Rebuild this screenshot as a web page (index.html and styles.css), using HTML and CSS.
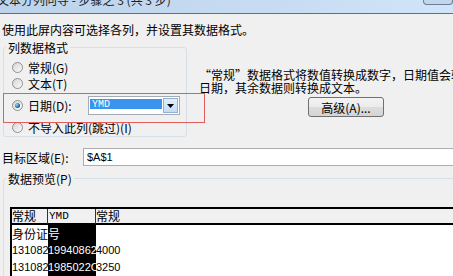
FILE: index.html
```html
<!DOCTYPE html>
<html lang="zh-CN">
<head>
  <meta charset="UTF-8">
  <title>文本分列向导</title>
  <link rel="stylesheet" href="styles.css">
</head>
<body>
  <div class="titlebar">
    <span class="title">文本分列向导 - 步骤之 3 (共 3 步)</span>
    <span class="close"></span>
  </div>

  <p class="intro">使用此屏内容可选择各列，并设置其数据格式。</p>

  <div class="format-row">
    <fieldset class="group format">
      <legend>列数据格式</legend>
      <label class="opt"><span class="radio"></span>常规(G)</label>
      <label class="opt"><span class="radio"></span>文本(T)</label>
      <label class="opt date">
        <span class="radio on"></span>
        <span class="date-label">日期(D):</span>
        <span class="select">
          <span class="sel-value">YMD</span>
          <span class="sel-btn">
            <svg width="7" height="4" viewBox="0 0 7 4"><path d="M0 0h7L3.5 4z" fill="#000"/></svg>
          </span>
        </span>
      </label>
      <label class="opt"><span class="radio"></span>不导入此列(跳过)(I)</label>
    </fieldset>

    <div class="desc">
      <p>“常规”数据格式将数值转换成数字，日期值会转换成</p>
      <p>日期，其余数据则转换成文本。</p>
      <button class="btn">高级(A)...</button>
    </div>

    <div class="mark"></div>
  </div>

  <div class="target">
    <span class="target-label">目标区域(E):</span>
    <span class="target-input">$A$1</span>
  </div>

  <fieldset class="group preview">
    <legend>数据预览(P)</legend>
    <div class="table">
      <div class="th c1">常规</div>
      <div class="th c2 mono">YMD</div>
      <div class="th">常规</div>

      <div class="td">身份证</div>
      <div class="td c2">号</div>
      <div class="td"></div>

      <div class="td num">131082</div>
      <div class="td c2 num">19940862</div>
      <div class="td num">4000</div>

      <div class="td num">131082</div>
      <div class="td c2 num">1985022C</div>
      <div class="td num">3250</div>
    </div>
  </fieldset>
</body>
</html>
```

FILE: styles.css
```css
* {
  margin: 0;
  padding: 0;
  box-sizing: border-box;
}

body {
  width: 453px;
  height: 276px;
  overflow: hidden;
  background: #f0f0f0;
  color: #000;
  font-family: "Noto Sans CJK SC", sans-serif;
  font-size: 12px;
}

.titlebar {
  display: flex;
  height: 14px;
  overflow: hidden;
  background: linear-gradient(90deg, #bcd3ea, #c7dcf2 60%, #d0e5f9);
  border-bottom: 1px solid #5d7088;
}

.title {
  margin: -8px 0 0 -3px;
  line-height: 16px;
  white-space: nowrap;
  color: #1e1e1e;
}

.close {
  margin-left: auto;
  width: 30px;
  height: 5px;
  background: #c3d7ec;
  border: 1px solid #6b7f97;
  border-top: none;
  border-radius: 0 0 4px 4px;
}

.intro {
  margin-top: 8px;
  padding-left: 2px;
  line-height: 16px;
  white-space: nowrap;
}

/* group boxes */
.group {
  min-width: 0;
  margin-left: 3px;
  border: 1px solid #d5dfe5;
  border-radius: 3px;
}

.group legend {
  padding: 0 2px;
  line-height: 13px;
}

.format-row {
  position: relative;
  display: flex;
  margin-top: 3px;
}

.format {
  flex: none;
  width: 184px;
  padding: 5px 0 1px 2px;
}

.opt {
  display: flex;
  align-items: center;
  height: 16px;
  padding-left: 6px;
  white-space: nowrap;
}

.opt.date {
  height: 19px;
  margin: 5px 0 4px;
}

.radio {
  flex: none;
  display: flex;
  align-items: center;
  justify-content: center;
  width: 11px;
  height: 11px;
  margin-right: 5px;
  border: 1px solid #8e8f8f;
  border-radius: 50%;
  background: linear-gradient(135deg, #d6d6d6, #fbfbfb);
}

.radio.on::after {
  content: "";
  width: 5px;
  height: 5px;
  border-radius: 50%;
  background: radial-gradient(circle at 35% 35%, #9ad6f7, #1c6aa3 60%, #0d3d6b);
}

.date-label {
  width: 60px;
}

.select {
  display: flex;
  width: 92px;
  height: 19px;
  padding: 1px;
  background: #fff;
  border: 1px solid #a5acb5;
}

.sel-value {
  flex: 1;
  margin: 1px 1px 4px 0;
  padding-left: 2px;
  background: #3a94ee;
  color: #fff;
  font-family: "Liberation Mono", monospace;
  font-size: 10px;
  line-height: 11px;
}

.sel-btn {
  display: flex;
  align-items: center;
  justify-content: center;
  width: 15px;
  background: linear-gradient(#e3effa, #c3dcf3);
  border: 1px solid #8eb2d9;
}

.desc {
  margin: 27px 0 0 12px;
  line-height: 13px;
  white-space: nowrap;
}

.btn {
  display: block;
  width: 76px;
  height: 20px;
  margin: 3px 0 0 109px;
  border: 1px solid #707070;
  border-radius: 3px;
  background: linear-gradient(#f3f3f3, #ebebeb 50%, #dddddd 50%, #d4d4d4);
  font: 12px "Noto Sans CJK SC", sans-serif;
  color: #000;
}

/* red annotation box */
.mark {
  position: absolute;
  left: 3px;
  top: 52px;
  width: 202px;
  height: 30px;
  border: 1px solid #e35c5c;
}

.target {
  display: flex;
  align-items: center;
  height: 18px;
  margin-top: 11px;
  padding-left: 2px;
  white-space: nowrap;
}

.target-label {
  flex: none;
  width: 81px;
}

.target-input {
  flex: none;
  width: 400px;
  height: 18px;
  padding-left: 3px;
  background: #fff;
  border: 1px solid #abadb3;
  font-family: "Liberation Sans", sans-serif;
  font-size: 11px;
  line-height: 16px;
}

.preview {
  width: 480px;
  height: 140px;
  margin-top: 6px;
  padding: 22px 0 0 2px;
}

/* preview grid */
.table {
  display: grid;
  grid-template-columns: 36px 48px 1fr;
  grid-template-rows: 16px;
  grid-auto-rows: 17px;
  margin-left: 4px;
  background: #fff;
  border-left: 2px solid #000;
  border-top: 2px solid #000;
}

.th {
  background: #f0f0f0;
  border-bottom: 2px solid #000;
  line-height: 14px;
  white-space: nowrap;
  overflow: hidden;
}

.th.c1,
.th.c2 {
  border-right: 1px solid #333;
}

.th.c2 {
  padding-left: 1px;
}

.mono {
  font-family: "Liberation Mono", monospace;
  font-size: 11px;
}

.td {
  line-height: 17px;
  white-space: nowrap;
  overflow: hidden;
}

.td.c2 {
  background: #000;
  color: #fff;
}

.num {
  font-family: "Liberation Sans", sans-serif;
  font-size: 11px;
  line-height: 16px;
}
```
